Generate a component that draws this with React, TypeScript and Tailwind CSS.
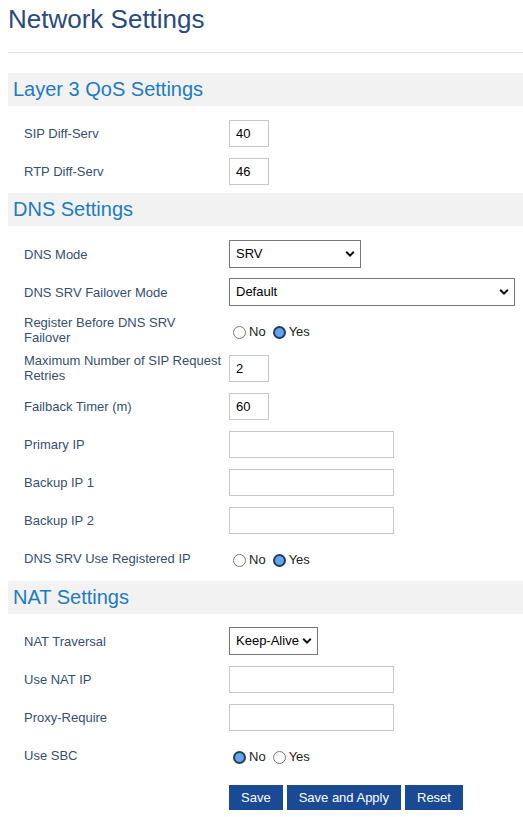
import { useState } from 'react';

const font = { fontFamily: '"Liberation Sans", Arial, sans-serif' };

function SectionHeader({ title }: { title: string }) {
  return (
    <div className="h-[33px] bg-[#f2f2f2] pl-[5px] text-[20px] leading-[33px] text-[#1d7bc1]">
      {title}
    </div>
  );
}

function Row({ label, children }: { label: string; children: React.ReactNode }) {
  return (
    <div className="grid h-[38px] grid-cols-[199px_1fr] items-center gap-x-[6px] pl-4">
      <div className="text-[13px] leading-[15px] text-[#34506e]">{label}</div>
      <div className="flex items-center">{children}</div>
    </div>
  );
}

function TextInput({ value = '', width }: { value?: string; width: string }) {
  const [v, setV] = useState(value);
  return (
    <input
      value={v}
      onChange={(e) => setV(e.target.value)}
      className={`${width} h-[27px] border border-[#c8c8c8] bg-white px-[6px] text-[13px] text-black outline-none`}
    />
  );
}

function Select({ value, options, width }: { value: string; options: string[]; width: string }) {
  const [v, setV] = useState(value);
  return (
    <div className={`relative ${width} h-[28px]`}>
      <select
        value={v}
        onChange={(e) => setV(e.target.value)}
        className="h-full w-full appearance-none border border-[#767676] bg-white pl-[6px] text-[13px] text-black outline-none"
      >
        {options.map((o) => (
          <option key={o}>{o}</option>
        ))}
      </select>
      <svg
        className="pointer-events-none absolute right-[6px] top-[10px]"
        width="10"
        height="8"
        viewBox="0 0 10 8"
      >
        <path d="M1.2 1.8 L5 5.6 L8.8 1.8" fill="none" stroke="#111" strokeWidth="2" />
      </svg>
    </div>
  );
}

function Radio({ checked }: { checked: boolean }) {
  return checked ? (
    <span className="inline-block h-[13px] w-[13px] rounded-full border-2 border-[#1f3c61] bg-[#63a4ea]" />
  ) : (
    <span className="inline-block h-[13px] w-[13px] rounded-full border border-[#767676] bg-white" />
  );
}

function YesNo({ yes }: { yes: boolean }) {
  const [val, setVal] = useState(yes);
  return (
    <div className="flex items-center pt-[4px] text-[13px] text-[#222]">
      <button className="ml-[4px] flex items-center" onClick={() => setVal(false)}>
        <Radio checked={!val} />
        <span className="ml-[3px]">No</span>
      </button>
      <button className="ml-[7px] flex items-center" onClick={() => setVal(true)}>
        <Radio checked={val} />
        <span className="ml-[3px]">Yes</span>
      </button>
    </div>
  );
}

export default function App() {
  return (
    <div className="min-h-[817px] bg-white pl-2" style={font}>
      <h1 className="pt-[4px] text-[26px] leading-[30px] text-[#2b4a7b]">Network Settings</h1>
      <hr className="mt-[18px] border-0 border-t border-[#dddddd]" />

      <div className="mt-[20px] pb-[3px]">
        <SectionHeader title="Layer 3 QoS Settings" />
        <div className="mt-2">
          <Row label="SIP Diff-Serv">
            <TextInput value="40" width="w-[40px]" />
          </Row>
          <Row label="RTP Diff-Serv">
            <TextInput value="46" width="w-[40px]" />
          </Row>
        </div>
      </div>

      <div className="pb-[4px]">
        <SectionHeader title="DNS Settings" />
        <div className="mt-[9px]">
          <Row label="DNS Mode">
            <Select value="SRV" options={['A Record', 'SRV', 'NAPTR/SRV', 'Use Configured IP']} width="w-[132px]" />
          </Row>
          <Row label="DNS SRV Failover Mode">
            <Select value="Default" options={['Default', 'Saved one until DNS TTL', 'Saved one until no response', 'Failback']} width="w-[286px]" />
          </Row>
          <Row label="Register Before DNS SRV Failover">
            <YesNo yes />
          </Row>
          <Row label="Maximum Number of SIP Request Retries">
            <TextInput value="2" width="w-[40px]" />
          </Row>
          <Row label="Failback Timer (m)">
            <TextInput value="60" width="w-[40px]" />
          </Row>
          <Row label="Primary IP">
            <TextInput width="w-[165px]" />
          </Row>
          <Row label="Backup IP 1">
            <TextInput width="w-[165px]" />
          </Row>
          <Row label="Backup IP 2">
            <TextInput width="w-[165px]" />
          </Row>
          <Row label="DNS SRV Use Registered IP">
            <YesNo yes />
          </Row>
        </div>
      </div>

      <div>
        <SectionHeader title="NAT Settings" />
        <div className="mt-2">
          <Row label="NAT Traversal">
            <Select value="Keep-Alive" options={['No', 'Keep-Alive', 'STUN', 'UPnP', 'Auto', 'VPN']} width="w-[89px]" />
          </Row>
          <Row label="Use NAT IP">
            <TextInput width="w-[165px]" />
          </Row>
          <Row label="Proxy-Require">
            <TextInput width="w-[165px]" />
          </Row>
          <Row label="Use SBC">
            <YesNo yes={false} />
          </Row>
        </div>
      </div>

      <div className="mt-[11px] flex gap-[4px] pl-[221px]">
        <button className="h-[25px] bg-[#1b4a94] px-[12px] text-[13px] text-white">Save</button>
        <button className="h-[25px] bg-[#1b4a94] px-[12px] text-[13px] text-white">Save and Apply</button>
        <button className="h-[25px] bg-[#1b4a94] px-[12px] text-[13px] text-white">Reset</button>
      </div>
    </div>
  );
}
